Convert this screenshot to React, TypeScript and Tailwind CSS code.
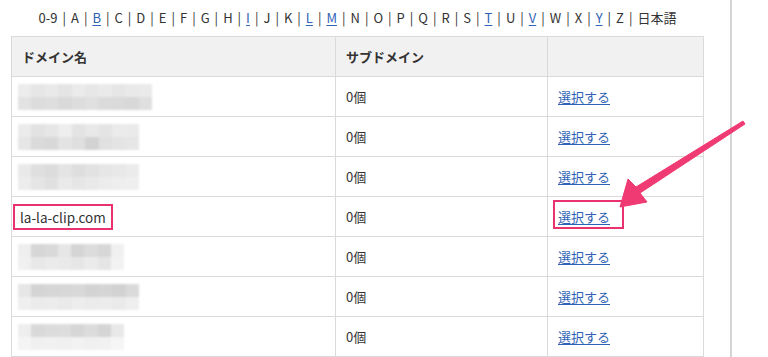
import React from 'react';

const letters = ['0-9', 'A', 'B', 'C', 'D', 'E', 'F', 'G', 'H', 'I', 'J', 'K', 'L', 'M', 'N', 'O', 'P', 'Q', 'R', 'S', 'T', 'U', 'V', 'W', 'X', 'Y', 'Z', '日本語'];
const linked = ['B', 'I', 'L', 'M', 'T', 'V', 'Y'];

// pixelated placeholder rows: [top blocks, bottom blocks] (gray levels)
type Blur = { w: number; top: string[]; bottom: string[] };
const rows: (Blur | null)[] = [
  { w: 134, top: ['#ececec', '#e6e6e6', '#e9e9e9', '#e4e4e4', '#ebebeb', '#e7e7e7', '#eaeaea', '#e6e6e6', '#e9e9e9', '#eaeaea'], bottom: ['#e2e2e2', '#dcdcdc', '#dedede', '#d9d9d9', '#dddddd', '#e0e0e0', '#dbdbdb', '#dadada', '#d8d8d8', '#dfdfdf'] },
  { w: 121, top: ['#ebebeb', '#e2e2e2', '#e6e6e6', '#eeeeee', '#e3e3e3', '#e8e8e8', '#e4e4e4', '#ebebeb', '#eaeaea'], bottom: ['#e6e6e6', '#dadada', '#d8d8d8', '#e3e3e3', '#dfdfdf', '#d3d3d3', '#e1e1e1', '#e4e4e4', '#e6e6e6'] },
  { w: 121, top: ['#e9e9e9', '#dfdfdf', '#dcdcdc', '#e4e4e4', '#dedede', '#e2e2e2', '#e6e6e6', '#e8e8e8', '#ebebeb'], bottom: ['#ececec', '#e5e5e5', '#e0e0e0', '#eaeaea', '#e6e6e6', '#e9e9e9', '#ececec', '#eeeeee', '#efefef'] },
  null,
  { w: 106, top: ['#eeeeee', '#d6d6d6', '#d9d9d9', '#e6e6e6', '#d5d5d5', '#dcdcdc', '#d7d7d7', '#f0f0f0'], bottom: ['#f0f0f0', '#e8e8e8', '#ebebeb', '#e9e9e9', '#e6e6e6', '#ebebeb', '#e5e5e5', '#f2f2f2'] },
  { w: 121, top: ['#e6e6e6', '#d4d4d4', '#d6d6d6', '#d7d7d7', '#d8d8d8', '#d3d3d3', '#d5d5d5', '#d2d2d2', '#dadada'], bottom: ['#efefef', '#ebebeb', '#ececec', '#eaeaea', '#ededed', '#ebebeb', '#ececec', '#eaeaea', '#eeeeee'] },
  { w: 106, top: ['#eeeeee', '#d9d9d9', '#dcdcdc', '#dddddd', '#d6d6d6', '#dcdcdc', '#d5d5d5', '#e8e8e8'], bottom: ['#f4f4f4', '#f0f0f0', '#f1f1f1', '#f0f0f0', '#f2f2f2', '#f0f0f0', '#f1f1f1', '#f5f5f5'] },
];

function Pixelated({ b }: { b: Blur }) {
  return (
    <div className="ml-[5px] flex flex-col blur-[1px]" style={{ width: b.w }}>
      {[b.top, b.bottom].map((line, i) => (
        <div key={i} className="flex h-[13px]">
          {line.map((c, j) => (
            <div key={j} className="h-full flex-1" style={{ background: c }} />
          ))}
        </div>
      ))}
    </div>
  );
}

export default function App() {
  return (
    <div className="relative h-[357px] w-[768px] overflow-hidden bg-white text-[#333] font-['Noto_Sans_CJK_JP','Noto_Sans',sans-serif]">
      <div className="flex h-full">
        <div className="w-[732px] border-r-2 border-[#d4d4d4] pl-[11px]">
          <div className="flex h-[36px] w-[693px] items-center justify-center gap-[5px] text-[13px]">
            {letters.map((l, i) => (
              <React.Fragment key={l}>
                {i > 0 && <span>|</span>}
                {linked.includes(l) ? (
                  <a className="text-[#2f62b5] underline underline-offset-2">{l}</a>
                ) : (
                  <span>{l}</span>
                )}
              </React.Fragment>
            ))}
          </div>

          <table className="w-[693px] border-collapse text-[13px]">
            <thead>
              <tr className="h-[40px] bg-[#f1f1f1]">
                <th className="w-[324px] border border-[#dadada] pl-[10px] text-left font-bold">ドメイン名</th>
                <th className="w-[212px] border border-[#dadada] pl-[10px] text-left font-bold">サブドメイン</th>
                <th className="border border-[#dadada]"></th>
              </tr>
            </thead>
            <tbody>
              {rows.map((r, i) => (
                <tr key={i} className="h-[40px]">
                  <td className="border border-[#dadada] pl-[1px]">
                    {r ? (
                      <Pixelated b={r} />
                    ) : (
                      <span className="inline-block border-2 border-[#e8336f] px-[5px] py-[1px] text-[13.5px] leading-[20px]">
                        la-la-clip.com
                      </span>
                    )}
                  </td>
                  <td className="border border-[#dadada] pl-[10px]">0個</td>
                  <td className="border border-[#dadada] pl-[5px]">
                    <span className={r ? 'relative -top-[2px] inline-block border-2 border-transparent pb-[1px] pl-[3px] pr-[12px] pt-[5px]' : 'relative -top-[2px] inline-block border-2 border-[#e8336f] pb-[1px] pl-[3px] pr-[12px] pt-[5px]'}>
                      <a className="text-[#2f62b5] underline underline-offset-2">選択する</a>
                    </span>
                  </td>
                </tr>
              ))}
            </tbody>
          </table>
        </div>
      </div>

      <svg className="pointer-events-none absolute left-0 top-0" width="768" height="357" viewBox="0 0 768 357">
        <polygon points="743,121 745,124 640,193 647,202 620,207 628,179 636,187" fill="#f03a73" stroke="#f03a73" strokeWidth="1" strokeLinejoin="round" />
      </svg>
    </div>
  );
}
